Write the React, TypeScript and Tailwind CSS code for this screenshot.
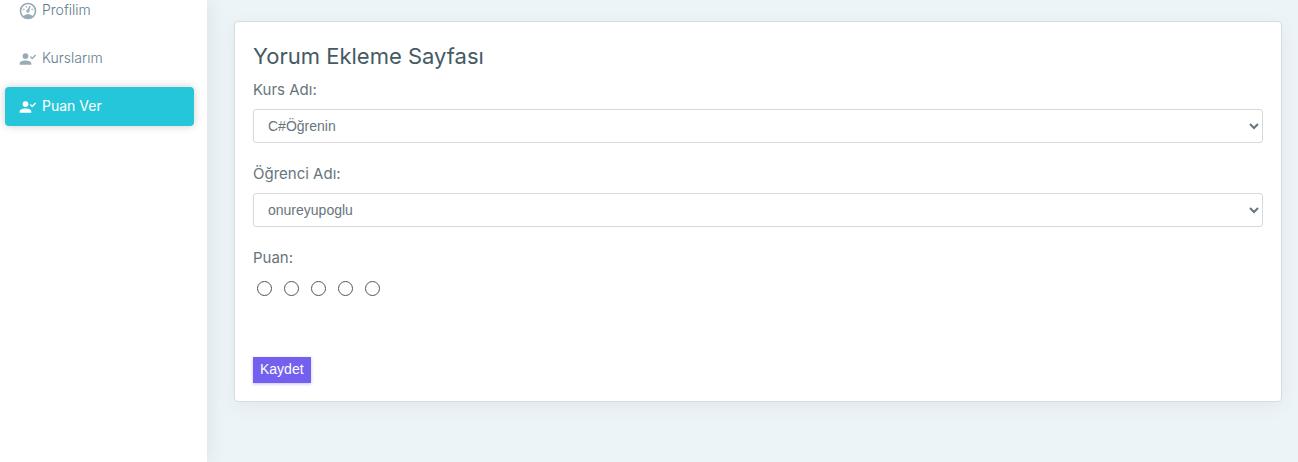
import { useState } from "react";

const GAUGE_PATH =
  "M12,2A10,10 0 0,0 2,12A10,10 0 0,0 12,22A10,10 0 0,0 22,12A10,10 0 0,0 12,2M12,4A8,8 0 0,1 20,12C20,14.4 19,16.5 17.3,18C15.9,16.7 14,16 12,16C10,16 8.2,16.7 6.7,18C5,16.5 4,14.4 4,12A8,8 0 0,1 12,4M14,5.89C13.62,5.9 13.26,6.15 13.1,6.54L11.81,9.77L11.71,10C11,10.13 10.41,10.6 10.14,11.26C9.73,12.29 10.23,13.45 11.26,13.86C12.29,14.27 13.45,13.77 13.86,12.74C14.12,12.08 14,11.32 13.57,10.76L13.67,10.5L14.96,7.29L14.97,7.26C15.17,6.75 14.92,6.17 14.41,5.96C14.28,5.91 14.15,5.89 14,5.89M10,6A1,1 0 0,0 9,7A1,1 0 0,0 10,8A1,1 0 0,0 11,7A1,1 0 0,0 10,6M7,9A1,1 0 0,0 6,10A1,1 0 0,0 7,11A1,1 0 0,0 8,10A1,1 0 0,0 7,9M17,9A1,1 0 0,0 16,10A1,1 0 0,0 17,11A1,1 0 0,0 18,10A1,1 0 0,0 17,9Z";

const ACCOUNT_CHECK_PATH =
  "M9,5A3.5,3.5 0 0,1 12.5,8.5A3.5,3.5 0 0,1 9,12A3.5,3.5 0 0,1 5.5,8.5A3.5,3.5 0 0,1 9,5M9,13.75C12.87,13.75 16,15.32 16,17.25V19H2V17.25C2,15.32 5.13,13.75 9,13.75M17,12.66L14.25,9.66L15.41,8.5L17,10.09L20.59,6.5L21.75,7.91L17,12.66";

type NavItemProps = { label: string; path: string; active?: boolean };

function NavItem({ label, path, active = false }: NavItemProps) {
  return (
    <li>
      <a
        href="#"
        aria-current={active ? "page" : undefined}
        className={
          active
            ? "flex h-[39px] items-center gap-1 rounded bg-[#26c6da] pl-[13px] text-sm text-white shadow-[0_0_8px_rgba(0,0,0,0.2)]"
            : "flex h-[39px] items-center gap-1 rounded pl-[13px] text-sm font-light text-[#607d8b]"
        }
      >
        <svg
          viewBox="0 0 24 24"
          aria-hidden="true"
          className={active ? "size-5 fill-white" : "size-5 fill-[#99abb4]"}
        >
          <path d={path} />
        </svg>
        <span className="pb-0.5">{label}</span>
      </a>
    </li>
  );
}

type SelectFieldProps = { id: string; label: string; options: string[] };

function SelectField({ id, label, options }: SelectFieldProps) {
  return (
    <div className="mb-[19px]">
      <label htmlFor={id} className="mb-[7px] block text-[15px] leading-6">
        {label}
      </label>
      <select
        id={id}
        className="block h-[34px] w-full rounded-[3px] border border-[#d9d9d9] bg-white pl-[10px] font-['Liberation_Sans',sans-serif] text-sm text-[#67757c]"
      >
        {options.map((option) => (
          <option key={option}>{option}</option>
        ))}
      </select>
    </div>
  );
}

export default function App() {
  const [score, setScore] = useState(0);

  return (
    <div className="flex min-h-screen overflow-hidden bg-[#ecf4f8] font-['Inter',sans-serif] text-[#67757c]">
      <aside className="w-[207px] shrink-0 bg-white shadow-[1px_0_20px_rgba(0,0,0,0.08)]">
        <nav>
          <ul className="-mt-[9px] flex flex-col gap-[9px] pr-[13px] pl-[5px]">
            <NavItem label="Profilim" path={GAUGE_PATH} />
            <NavItem label="Kurslarım" path={ACCOUNT_CHECK_PATH} />
            <NavItem label="Puan Ver" path={ACCOUNT_CHECK_PATH} active />
          </ul>
        </nav>
      </aside>
      <main className="min-w-0 flex-1 pt-[21px] pr-4 pl-[27px]">
        <form
          onSubmit={(event) => event.preventDefault()}
          className="rounded border border-[#d3dde1] bg-white p-[18px] shadow-[0_5px_20px_rgba(0,0,0,0.05)]"
        >
          <h1 className="mb-1.5 text-[22px] leading-8 text-[#455a64]">Yorum Ekleme Sayfası</h1>
          <SelectField id="course" label="Kurs Adı:" options={["C#Öğrenin"]} />
          <SelectField id="student" label="Öğrenci Adı:" options={["onureyupoglu"]} />
          <fieldset>
            <legend className="mb-[11px] text-[15px] leading-6">Puan:</legend>
            <div className="flex gap-3 pl-1">
              {[1, 2, 3, 4, 5].map((value) => (
                <input
                  key={value}
                  type="radio"
                  name="score"
                  value={value}
                  aria-label={String(value)}
                  checked={score === value}
                  onChange={() => setScore(value)}
                  className="size-[15px] appearance-none rounded-full border border-[#555555] bg-white checked:border-4 checked:border-[#7460ee]"
                />
              ))}
            </div>
          </fieldset>
          <button
            type="submit"
            className="mt-[61px] block h-[26px] bg-[#7460ee] px-[7px] pb-0.5 font-['Liberation_Sans',sans-serif] text-sm text-white shadow-[0_1px_3px_rgba(116,96,238,0.4)]"
          >
            Kaydet
          </button>
        </form>
      </main>
    </div>
  );
}
